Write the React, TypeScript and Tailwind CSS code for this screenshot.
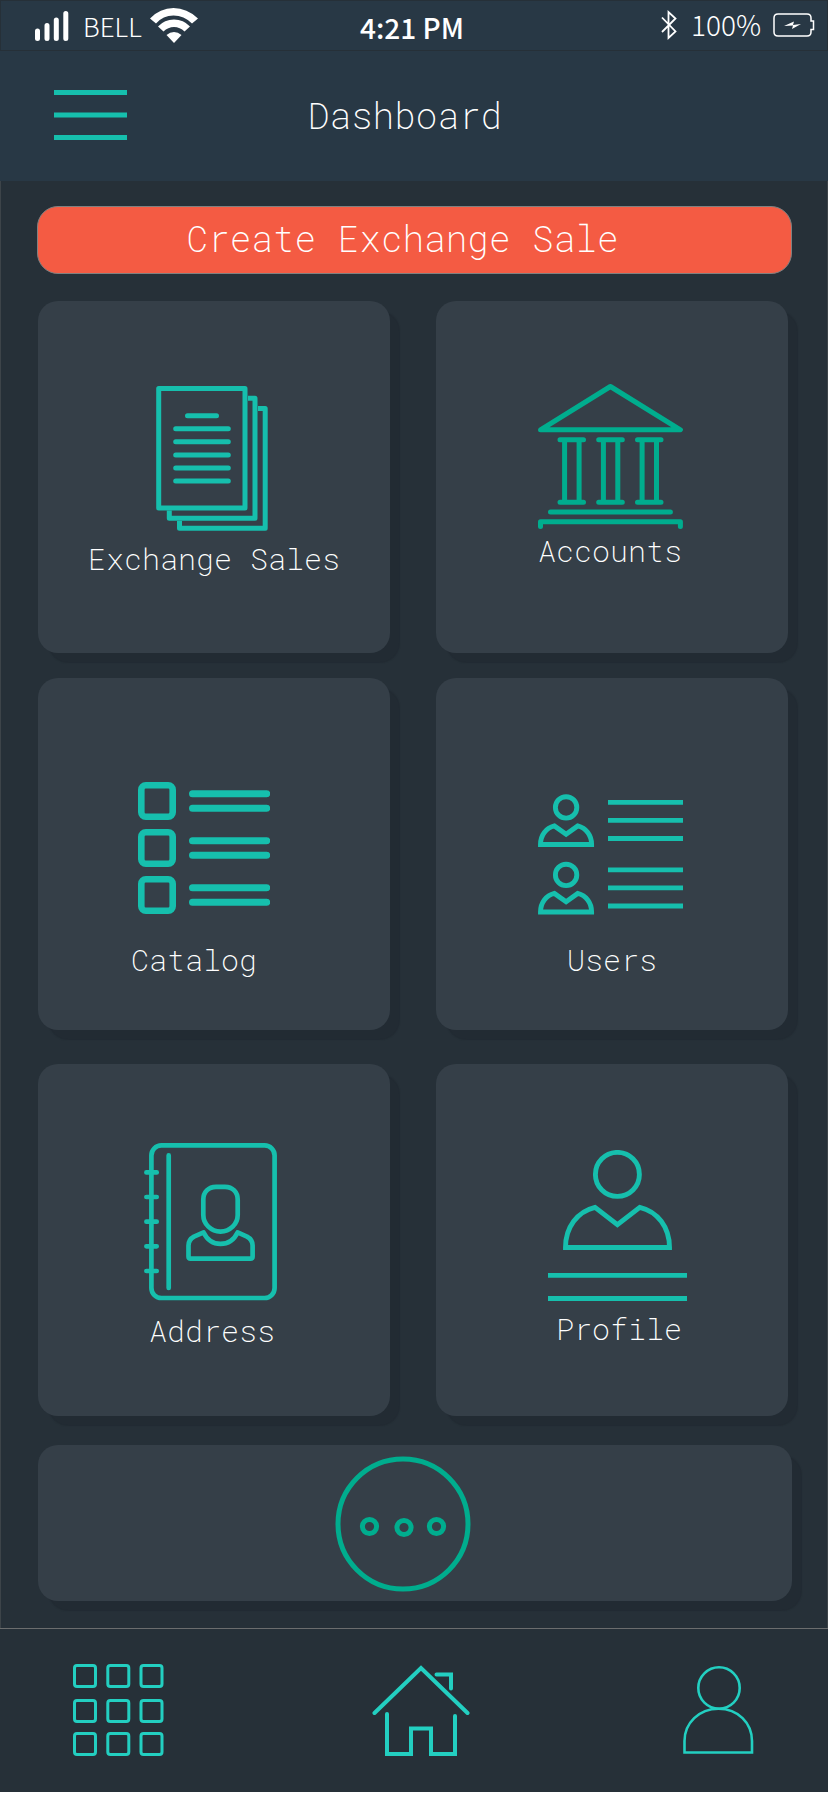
import type { ReactNode } from "react";

const teal = "text-[#16bfad]";
const green = "text-[#00ad8e]";

function DocumentsIcon() {
  return (
    <svg className={`h-[145px] w-28 ${teal}`} viewBox="0 0 112 145" fill="none" stroke="currentColor" strokeWidth="5" strokeLinecap="round" strokeLinejoin="round" aria-hidden="true">
      <rect x="2.7" y="2.5" width="86.3" height="119.6" />
      <path d="M92 12.3H99V132.3H13.3V124.5" strokeLinecap="butt" />
      <path d="M102 22.4H109.2V142.3H23.5V135" strokeLinecap="butt" />
      <path d="M31.5 29.7H60.5M19.7 42.7H72.3M19.7 55.8H72.3M19.7 68.9H72.3M19.7 82H72.3M19.7 95H72.3" />
    </svg>
  );
}

function BankIcon() {
  return (
    <svg className={`h-[145px] w-[145px] ${green}`} viewBox="0 0 145 145" fill="none" stroke="currentColor" strokeWidth="5" strokeLinecap="round" strokeLinejoin="round" aria-hidden="true">
      <path d="M2.5 45.8L72.4 2.5L142.4 45.8Z" />
      <path d="M22 55.7H45.5M22 118.3H45.5M26.6 56V118M41.1 56V118" />
      <path d="M60.7 55.7H84.3M60.7 118.3H84.3M65.4 56V118M79.8 56V118" />
      <path d="M99.5 55.7H123M99.5 118.3H123M104.1 56V118M118.5 56V118" />
      <path d="M12.5 128H132.4M2.5 142.4V137.7H142.4V142.4" />
    </svg>
  );
}

function CatalogIcon() {
  return (
    <svg className={`h-[132px] w-[132px] ${teal}`} viewBox="0 0 132 132" fill="none" stroke="currentColor" strokeWidth="6.6" strokeLinecap="round" aria-hidden="true">
      {[0, 47, 94].map((y) => (
        <g key={y}>
          <rect x="3.3" y={y + 3.3} width="31.4" height="31.4" rx="4.5" />
          <path d={`M54.5 ${y + 11.8}H128.7M54.5 ${y + 26.2}H128.7`} strokeWidth="7" />
        </g>
      ))}
    </svg>
  );
}

function UsersIcon() {
  return (
    <svg className={`h-[122px] w-[145px] ${teal}`} viewBox="0 0 145 122" fill="none" stroke="currentColor" strokeWidth="4.9" aria-hidden="true">
      {[0, 67.5].map((y) => (
        <g key={y} transform={`translate(0 ${y})`}>
          <circle cx="28.1" cy="13.4" r="10.7" />
          <path d="M2.5 50.5C2.5 41 8 34 16.4 31.9L28.1 40.3L39.7 31.9C48 34 53.6 41 53.6 50.5Z" />
          <path d="M70 8.4H145M70 26.4H145M70 44.5H145" />
        </g>
      ))}
    </svg>
  );
}

function AddressBookIcon() {
  return (
    <svg className={`h-[158px] w-[133px] ${teal}`} viewBox="0 0 133 158" fill="none" stroke="currentColor" strokeWidth="4.7" strokeLinecap="round" strokeLinejoin="round" aria-hidden="true">
      <rect x="7.4" y="2.4" width="123.2" height="152.6" rx="10" />
      <path d="M24.7 12.4V145M2.4 29.4H12.7M2.4 54H12.7M2.4 78.7H12.7M2.4 103.3H12.7M2.4 128H12.7" />
      <path d="M59.3 56.5C59.3 49 64.5 43.8 72 43.8H81C88.5 43.8 93.7 49 93.7 56.5V72C93.7 81 86 88.6 76.5 88.6S59.3 81 59.3 72Z" />
      <path d="M59.6 89.4C63 96.5 69 100.8 76.5 100.8S90.2 96.5 93.6 89.4L103 93.6Q108.6 96.6 108.6 102.6V113.6Q108.6 115.7 106.5 115.7H46.6Q44.5 115.7 44.5 113.6V102.6Q44.5 96.6 50 93.6Z" />
    </svg>
  );
}

function ProfileIcon() {
  return (
    <svg className={`h-[151px] w-[139px] ${teal}`} viewBox="0 0 139 151" fill="none" stroke="currentColor" strokeWidth="4.9" aria-hidden="true">
      <circle cx="69.4" cy="24.4" r="22" />
      <path d="M17.5 97.5C17.5 77 29.5 61.5 47 57.3L69.4 74.6L91.8 57.3C109.5 61.5 121.5 77 121.5 97.5Z" />
      <path d="M0 125.4H139M0 148.5H139" />
    </svg>
  );
}

function MoreIcon() {
  return (
    <svg className={`h-[136px] w-[136px] ${green}`} viewBox="0 0 136 136" fill="none" stroke="currentColor" strokeWidth="5" aria-hidden="true">
      <circle cx="68" cy="68" r="65" />
      <circle cx="34.5" cy="70.5" r="7.1" />
      <circle cx="69" cy="71.5" r="7.1" />
      <circle cx="101.5" cy="70.5" r="7.1" />
    </svg>
  );
}

type TileProps = { label: string; icon: ReactNode; content: string; text: string };

function Tile({ label, icon, content, text }: TileProps) {
  return (
    <a
      href="#"
      className={`flex aspect-square flex-col items-center rounded-[20px] bg-[#353f48] shadow-[10px_10px_1px_#222b33] ${content}`}
    >
      {icon}
      <span className={`text-[30px] leading-10 whitespace-nowrap ${text}`}>{label}</span>
    </a>
  );
}

function StatusBar() {
  return (
    <div className="grid h-[51px] grid-cols-[1fr_auto_1fr] items-center border border-[#263038] font-['Noto_Sans_CJK_SC','Noto_Sans',sans-serif] text-[28px] leading-none text-white">
      <div className="flex items-center pl-[34px]">
        <svg className="h-8 w-[34px]" viewBox="0 0 34 32" fill="none" stroke="currentColor" strokeWidth="5" strokeLinecap="round" role="img" aria-label="Signal">
          <path d="M2.5 21V28.5M12 15.5V28.5M21.3 10V28.5M30.8 3.5V28.5" />
        </svg>
        <span className="ml-3.5 text-[26px] font-light">BELL</span>
        <svg className="ml-2 h-9 w-12" viewBox="0 0 48 36" fill="currentColor" role="img" aria-label="Wi-Fi">
          <path d="M0 10.5Q10 0 23.5 0T48 10.5L42 15.5Q34 7.5 23.5 7.5T6 15.5Z" />
          <path d="M8 18.5Q14.5 11.5 24 11.5T40 18.5L34.5 23.5Q30 19 24 19T13.5 23.5Z" />
          <path d="M16.5 27Q20 24 24 24T31.5 27L24 35Z" />
        </svg>
      </div>
      <span className="pt-0.5 pr-1 font-medium">4:21 PM</span>
      <div className="flex items-center justify-end pr-3 pb-0.5">
        <svg className="h-8 w-4" viewBox="0 0 16 32" fill="none" stroke="currentColor" strokeWidth="1.8" role="img" aria-label="Bluetooth">
          <path d="M1 8.5L14.5 22.5L7.5 29V3L14.5 9.5L1 23" />
        </svg>
        <span className="ml-3.5 pb-0.5 font-light">100%</span>
        <svg className="ml-3 h-6 w-[42px]" viewBox="0 0 42 24" fill="none" stroke="currentColor" strokeWidth="1.5" role="img" aria-label="Charging">
          <path d="M5 1H34Q38 1 38 5V8H40.5V16.5H38V19Q38 23 34 23H5Q1 23 1 19V5Q1 1 5 1Z" />
          <path d="M11 13L21 8.5L20 12L28 11L19 16L20 12.5Z" fill="currentColor" stroke="none" />
        </svg>
      </div>
    </div>
  );
}

export default function App() {
  return (
    <div className="min-h-screen bg-white pr-3 pb-3 font-['Roboto_Mono','Liberation_Mono',monospace] font-extralight text-white">
      <div className="bg-[#263038]">
        <div className="bg-[#283845]">
          <StatusBar />
          <header className="grid h-[130px] grid-cols-[1fr_auto_1fr] items-center px-[54px] pb-0.5">
            <button type="button" aria-label="Menu" className={`w-[73px] ${teal}`}>
              <svg className="h-[50px] w-[73px]" viewBox="0 0 73 50" fill="none" stroke="currentColor" strokeWidth="4.8" aria-hidden="true">
                <path d="M0 2.5H73M0 25H73M0 47.5H73" />
              </svg>
            </button>
            <h1 className="pr-[18px] text-[36px] leading-10">Dashboard</h1>
          </header>
        </div>

        <main className="border-x border-[#3d4449] pt-[25px] pr-[35px] pb-[27px] pl-9">
          <button
            type="button"
            className="h-[68px] w-full rounded-[21px] border border-[#808080] bg-[#f45b43] pr-6 pb-1 text-[36px] leading-10"
          >
            Create Exchange Sale
          </button>
          <div className="grid gap-[29px] pt-[27px] pl-px">
            <div className="grid grid-cols-2 gap-x-[46px] gap-y-[25px] pr-1">
              <Tile label="Exchange Sales" icon={<DocumentsIcon />} content="pt-[85px] pr-1" text="pt-2 pl-1" />
              <Tile label="Accounts" icon={<BankIcon />} content="pt-[83px] pr-1" text="pt-0.5" />
              <Tile label="Catalog" icon={<CatalogIcon />} content="pt-[104px] pr-5" text="pt-[26px] pr-5" />
              <Tile label="Users" icon={<UsersIcon />} content="pt-[116px] pr-1" text="pt-6 pl-1" />
            </div>
            <div className="grid grid-cols-2 gap-x-[46px] pt-[5px] pr-1">
              <Tile label="Address" icon={<AddressBookIcon />} content="pt-[79px] pr-2" text="pt-2.5 pl-1" />
              <Tile label="Profile" icon={<ProfileIcon />} content="pt-[86px] pl-2.5" text="pt-2 pl-1" />
            </div>
            <button
              type="button"
              aria-label="More"
              className="flex h-[156px] items-center justify-center rounded-[20px] bg-[#353f48] pt-0.5 pr-6 shadow-[10px_10px_1px_#222b33]"
            >
              <MoreIcon />
            </button>
          </div>
        </main>

        <nav aria-label="Main" className="flex h-[164px] items-center justify-between border-t border-[#6b6d6e] px-[73px] pb-0.5 text-[#23cfc1]">
          <a href="#" aria-label="Apps">
            <svg className="h-[92px] w-[92px]" viewBox="0 0 92 92" fill="none" stroke="currentColor" strokeWidth="3" aria-hidden="true">
              {[0, 35, 68].map((y) =>
                [0, 33.3, 66.5].map((x) => (
                  <rect key={`${x}-${y}`} x={x + 1.5} y={y + 1.5} width="21" height="21" rx="2.5" />
                )),
              )}
            </svg>
          </a>
          <a href="#" aria-label="Home">
            <svg className="h-[92px] w-[98px]" viewBox="0 0 98 92" fill="none" stroke="currentColor" strokeWidth="4" strokeLinecap="round" aria-hidden="true">
              <path d="M2.5 49L49 4L95.5 49" />
              <path d="M15 50V90H39V64.5H59V90H83V52" />
              <path d="M64.5 10.5H79V24.5" />
            </svg>
          </a>
          <a href="#" aria-label="Account" className="pl-1.5">
            <svg className="h-[92px] w-[72px]" viewBox="0 0 72 92" fill="none" stroke="currentColor" strokeWidth="2.6" aria-hidden="true">
              <circle cx="36" cy="24" r="20.7" />
              <path d="M1.5 88.5V77C1.5 59 16 44.7 35.5 44.7S69 59 69 77V88.5Z" />
            </svg>
          </a>
        </nav>
      </div>
    </div>
  );
}
